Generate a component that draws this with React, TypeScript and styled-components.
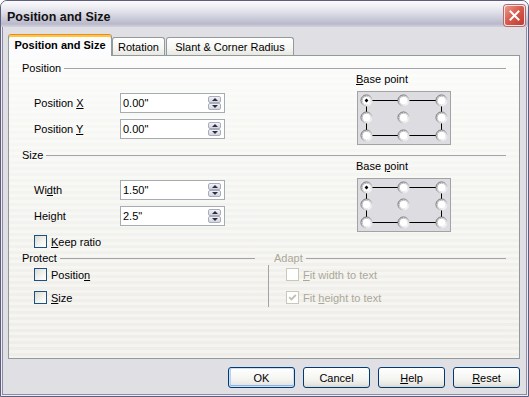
import React from "react";
import styled, { createGlobalStyle } from "styled-components";

const GlobalStyle = createGlobalStyle`
  html, body { margin: 0; padding: 0; background: #ffffff; }
  body { font-family: "Liberation Sans", Arial, sans-serif; font-size: 11px; color: #000; }
  * { box-sizing: border-box; }
  u { text-decoration: underline; text-underline-offset: 1px; }
`;

const Window = styled.div`
  width: 529px;
  height: 397px;
  display: flex;
  flex-direction: column;
  border: 1px solid #5e5e7c;
  border-radius: 7px 7px 0 0;
  overflow: hidden;
  background: #dfdfe4;
`;

const TitleBar = styled.div`
  height: 26px;
  flex: none;
  display: flex;
  align-items: flex-start;
  justify-content: space-between;
  padding: 0 3px 0 6px;
  background: linear-gradient(
    to bottom,
    #fbfbfd 0%,
    #f1f1f6 18%,
    #dedee8 45%,
    #c6c6d6 72%,
    #b9b9cc 88%,
    #d2d2de 100%
  );
`;

const TitleText = styled.div`
  font-weight: bold;
  font-size: 12.5px;
  line-height: 16px;
  padding-top: 8px;
  color: #111;
`;

const CloseButton = styled.div`
  width: 21px;
  height: 21px;
  margin-top: 4px;
  border: 1px solid #f4e4e4;
  border-radius: 3px;
  background: linear-gradient(135deg, #ec9a8d 0%, #d75d4d 45%, #bf3a32 100%);
  box-shadow: 0 0 0 1px #b66a70;
  display: flex;
  align-items: center;
  justify-content: center;
`;

const Body = styled.div`
  flex: 1;
  display: flex;
  flex-direction: column;
  padding: 7px 8px 8px 7px;
  box-shadow: inset 1px 0 0 #ececf2, inset -1px 0 0 #ececf2, inset 0 -1px 0 #ececf2,
    inset 2px 0 0 #8c8ca6, inset -2px 0 0 #8c8ca6, inset 0 -2px 0 #8c8ca6;
`;

const TabStrip = styled.div`
  height: 21px;
  flex: none;
  display: flex;
  align-items: flex-end;
`;

const Tab = styled.div<{ $active?: boolean; $width: number; $gap?: number }>`
  position: relative;
  z-index: ${(p) => (p.$active ? 2 : 1)};
  width: ${(p) => p.$width}px;
  margin-left: ${(p) => p.$gap ?? 0}px;
  height: ${(p) => (p.$active ? 22 : 18)}px;
  margin-bottom: ${(p) => (p.$active ? -1 : 0)}px;
  display: flex;
  align-items: center;
  justify-content: center;
  white-space: nowrap;
  font-weight: ${(p) => (p.$active ? "bold" : "normal")};
  border: 1px solid #919b9c;
  border-bottom: none;
  border-radius: 3px 3px 0 0;
  padding-bottom: ${(p) => (p.$active ? 1 : 0)}px;
  border-top-color: ${(p) => (p.$active ? "#e68b2c" : "#919b9c")};
  background: ${(p) =>
    p.$active
      ? "#fcfcfe"
      : "linear-gradient(to bottom, #ffffff 0%, #f6f6f3 60%, #e8e7e1 100%)"};
  box-shadow: ${(p) => (p.$active ? "inset 0 2px 0 #ffc83c" : "none")};
`;

const Panel = styled.div`
  flex: 1;
  position: relative;
  z-index: 1;
  border: 1px solid #919b9c;
  border-left-color: #8f999a;
  background:
    repeating-linear-gradient(
      to bottom,
      rgba(255, 255, 255, 0.35) 0px,
      rgba(255, 255, 255, 0.35) 3px,
      rgba(0, 0, 0, 0) 3px,
      rgba(0, 0, 0, 0) 6px
    ),
    linear-gradient(to bottom, #fbfbfa 0%, #f4f4f0 40%, #eeede8 100%);
  padding: 6px 13px 0 13px;
  display: flex;
  flex-direction: column;
`;

const SectionHeader = styled.div<{ $top?: number; $disabled?: boolean; $indent?: number; $trail?: number }>`
  height: 13px;
  line-height: 13px;
  margin-top: ${(p) => p.$top ?? 0}px;
  padding-left: ${(p) => p.$indent ?? 0}px;
  margin-right: ${(p) => p.$trail ?? 0}px;
  display: flex;
  align-items: center;
  gap: 3px;
  color: ${(p) => (p.$disabled ? "#aca899" : "#000")};
  white-space: nowrap;
  &::after {
    content: "";
    flex: 1;
    height: 1px;
    background: #a2a2a8;
  }
`;

const SectionGrid = styled.div`
  display: grid;
  grid-template-columns: 335px 94px;
  align-items: start;
`;

const Fields = styled.div`
  padding: 18px 0 0 12px;
  display: flex;
  flex-direction: column;
  gap: 6px;
`;

const FieldRow = styled.div`
  display: grid;
  grid-template-columns: 86px 105px;
  align-items: center;
  height: 20px;
`;

const InputBox = styled.div`
  height: 20px;
  border: 1px solid #a5acb2;
  background: #ffffff;
  display: flex;
  align-items: center;
  padding: 0 3px 0 2px;
`;

const InputText = styled.span`
  flex: 1;
`;

const Spin = styled.div`
  width: 13px;
  height: 14px;
  display: flex;
  flex-direction: column;
`;

const SpinButton = styled.div<{ $dir: "up" | "down" }>`
  flex: 1;
  border: 1px solid #a8acbc;
  border-radius: 2px;
  background: linear-gradient(to bottom, #f1f2f6 0%, #d2d5e0 100%);
  display: flex;
  align-items: center;
  justify-content: center;
  &::after {
    content: "";
    width: 0;
    height: 0;
    border-left: 3px solid transparent;
    border-right: 3px solid transparent;
    ${(p) =>
      p.$dir === "up" ? "border-bottom: 3px solid #2e2e3a;" : "border-top: 3px solid #2e2e3a;"}
  }
`;

const BaseColumn = styled.div`
  margin-top: -2px;
  display: flex;
  flex-direction: column;
`;

const BaseLabel = styled.div`
  line-height: 13px;
  margin-bottom: 5px;
  margin-left: -1px;
`;

const BaseBox = styled.div`
  width: 94px;
  height: 54px;
  border: 1px solid #a3a3a6;
  background: #dddce1;
`;

const CheckRows = styled.div<{ $indent: number }>`
  padding: 3px 0 0 ${(p) => p.$indent}px;
  display: flex;
  flex-direction: column;
  gap: 10px;
`;

const CheckRow = styled.label<{ $top?: number; $disabled?: boolean }>`
  display: flex;
  align-items: center;
  gap: 4px;
  height: 13px;
  margin-top: ${(p) => p.$top ?? 0}px;
  color: ${(p) => (p.$disabled ? "#aca899" : "#000")};
`;

const CheckBox = styled.span<{ $disabled?: boolean }>`
  width: 13px;
  height: 13px;
  flex: none;
  border: 1px solid ${(p) => (p.$disabled ? "#cac8bb" : "#1c5180")};
  background: ${(p) =>
    p.$disabled ? "#ffffff" : "linear-gradient(135deg, #dcdcd5 0%, #f4f4f0 60%, #ffffff 100%)"};
  display: flex;
  align-items: center;
  justify-content: center;
`;

const BottomGrid = styled.div`
  display: grid;
  grid-template-columns: 246px 1fr;
  margin-top: 4px;
`;

const AdaptBody = styled.div`
  height: 42px;
  border-left: 1px solid #a2a2a8;
`;

const ButtonRow = styled.div`
  flex: none;
  margin-top: 8px;
  display: flex;
  justify-content: flex-end;
  gap: 8px;
`;

const Button = styled.div<{ $default?: boolean }>`
  width: 67px;
  height: 21px;
  border: 1px solid #003c74;
  border-radius: 3px;
  display: flex;
  align-items: center;
  justify-content: center;
  background: linear-gradient(to bottom, #ffffff 0%, #f5f5f3 55%, #e9e8e2 85%, #d8d5cc 100%);
  box-shadow: ${(p) =>
    p.$default
      ? "inset 0 0 0 1px #cddff7, inset 0 -2px 0 0 #8fb2e6, inset 1px 0 0 1px #b7cff0"
      : "none"};
`;

function Field({ label, value }: { label: React.ReactNode; value: string }) {
  return (
    <FieldRow>
      <span>{label}</span>
      <InputBox>
        <InputText>{value}</InputText>
        <Spin>
          <SpinButton $dir="up" />
          <SpinButton $dir="down" />
        </Spin>
      </InputBox>
    </FieldRow>
  );
}

function BasePointGraphic() {
  const xs = [8.5, 45.5, 83.5];
  const ys = [8.5, 25.5, 43.5];
  return (
    <svg width="92" height="52" viewBox="0 0 92 52" style={{ display: "block" }}>
      <defs>
        <linearGradient id="rOuter" x1="0" y1="0" x2="1" y2="1">
          <stop offset="0" stopColor="#4e4e52" />
          <stop offset="0.5" stopColor="#8a8a8e" />
          <stop offset="0.8" stopColor="#e6e6e8" />
          <stop offset="1" stopColor="#ffffff" />
        </linearGradient>
        <linearGradient id="rInner" x1="0" y1="0" x2="1" y2="1">
          <stop offset="0" stopColor="#a0a0a4" />
          <stop offset="0.6" stopColor="#dadadc" />
          <stop offset="1" stopColor="#f4f4f4" />
        </linearGradient>
      </defs>
      <path d="M8.5 8.5 H83.5 V43.5 H8.5 Z" fill="none" stroke="#000" strokeWidth="1" />
      {ys.map((y) =>
        xs.map((x) => (
          <g key={`${x}-${y}`}>
            <circle cx={x} cy={y} r={5.5} fill="#ffffff" stroke="url(#rOuter)" strokeWidth="1" />
            <circle cx={x} cy={y} r={4.3} fill="none" stroke="url(#rInner)" strokeWidth="1" />
          </g>
        ))
      )}
      <path d="M8.5 6.6 L10.4 8.5 L8.5 10.4 L6.6 8.5 Z" fill="#000" />
    </svg>
  );
}

function BasePoint({ label }: { label: React.ReactNode }) {
  return (
    <BaseColumn>
      <BaseLabel>{label}</BaseLabel>
      <BaseBox>
        <BasePointGraphic />
      </BaseBox>
    </BaseColumn>
  );
}

function Check({
  label,
  checked,
  disabled,
  top,
}: {
  label: React.ReactNode;
  checked?: boolean;
  disabled?: boolean;
  top?: number;
}) {
  return (
    <CheckRow $disabled={disabled} $top={top}>
      <CheckBox $disabled={disabled}>
        {checked && (
          <svg width="9" height="9" viewBox="0 0 9 9">
            <path
              d="M1.2 4.2 L3.4 6.4 L7.8 2"
              fill="none"
              stroke={disabled ? "#c3c0b0" : "#21a121"}
              strokeWidth="1.8"
            />
          </svg>
        )}
      </CheckBox>
      <span>{label}</span>
    </CheckRow>
  );
}

export default function App() {
  return (
    <>
      <GlobalStyle />
      <Window>
        <TitleBar>
          <TitleText>Position and Size</TitleText>
          <CloseButton aria-label="Close">
            <svg width="11" height="11" viewBox="0 0 11 11">
              <path
                d="M1.5 1.5 L9.5 9.5 M9.5 1.5 L1.5 9.5"
                stroke="#ffffff"
                strokeWidth="2"
                strokeLinecap="square"
              />
            </svg>
          </CloseButton>
        </TitleBar>
        <Body>
          <TabStrip>
            <Tab $active $width={104}>
              Position and Size
            </Tab>
            <Tab $width={53}>Rotation</Tab>
            <Tab $width={128} $gap={1}>
              Slant &amp; Corner Radius
            </Tab>
          </TabStrip>
          <Panel>
            <SectionHeader>Position</SectionHeader>
            <SectionGrid>
              <Fields>
                <Field label={<>Position <u>X</u></>} value={'0.00"'} />
                <Field label={<>Position <u>Y</u></>} value={'0.00"'} />
              </Fields>
              <BasePoint label={<><u>B</u>ase point</>} />
            </SectionGrid>

            <SectionHeader $top={4}>Size</SectionHeader>
            <SectionGrid>
              <Fields>
                <Field label={<>Wi<u>d</u>th</>} value={'1.50"'} />
                <Field label={<>Hei<u>g</u>ht</>} value={'2.5"'} />
                <Check label={<><u>K</u>eep ratio</>} top={3} />
              </Fields>
              <BasePoint label={<>Base <u>p</u>oint</>} />
            </SectionGrid>

            <BottomGrid>
              <div>
                <SectionHeader $trail={13}>Protect</SectionHeader>
                <CheckRows $indent={12}>
                  <Check label={<>Positio<u>n</u></>} />
                  <Check label={<><u>S</u>ize</>} />
                </CheckRows>
              </div>
              <div>
                <SectionHeader $disabled $indent={6}>
                  Adapt
                </SectionHeader>
                <AdaptBody>
                  <CheckRows $indent={17}>
                    <Check disabled label={<><u>F</u>it width to text</>} />
                    <Check disabled checked label={<>Fit <u>h</u>eight to text</>} />
                  </CheckRows>
                </AdaptBody>
              </div>
            </BottomGrid>
          </Panel>
          <ButtonRow>
            <Button $default>OK</Button>
            <Button>Cancel</Button>
            <Button>
              <span>
                <u>H</u>elp
              </span>
            </Button>
            <Button>
              <span>
                <u>R</u>eset
              </span>
            </Button>
          </ButtonRow>
        </Body>
      </Window>
    </>
  );
}
